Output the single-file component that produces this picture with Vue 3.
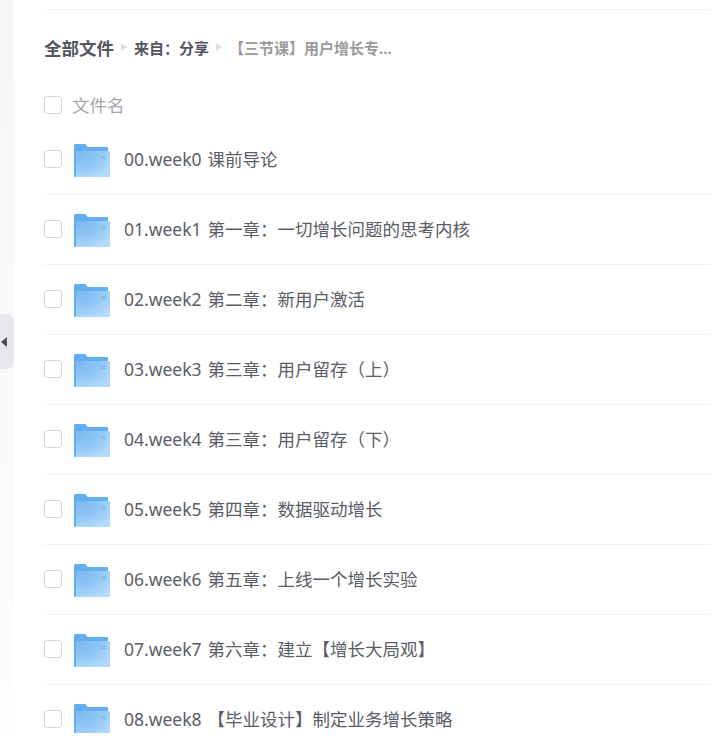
<script setup>
const files = [
  '00.week0 课前导论',
  '01.week1 第一章：一切增长问题的思考内核',
  '02.week2 第二章：新用户激活',
  '03.week3 第三章：用户留存（上）',
  '04.week4 第三章：用户留存（下）',
  '05.week5 第四章：数据驱动增长',
  '06.week6 第五章：上线一个增长实验',
  '07.week7 第六章：建立【增长大局观】',
  '08.week8 【毕业设计】制定业务增长策略'
];
</script>

<template>
  <div class="page">
    <aside class="side">
      <div class="handle"><span class="arrow"></span></div>
    </aside>
    <main class="content">
      <div class="crumbs">
        <span class="crumb-root">全部文件</span>
        <span class="sep"></span>
        <span class="crumb-mid">来自：分享</span>
        <span class="sep"></span>
        <span class="crumb-last">【三节课】用户增长专...</span>
      </div>
      <div class="head">
        <span class="check"></span>
        <span class="head-name">文件名</span>
      </div>
      <div v-for="name in files" :key="name" class="row">
        <span class="check"></span>
        <svg class="folder" width="36" height="33" viewBox="0 0 36 33">
          <defs>
            <radialGradient id="front" cx="0.15" cy="0.05" r="1.05">
              <stop offset="0" stop-color="#7cb9f0" />
              <stop offset="0.5" stop-color="#8fc5f5" />
              <stop offset="1" stop-color="#b2d9fc" />
            </radialGradient>
          </defs>
          <path d="M0 1.5Q0 0 1.5 0H11.5L13.5 3H33Q34 3 34 4V8H2V33H1.5Q0 33 0 31.5Z" fill="#62aeef" />
          <path d="M2 7H35Q36 7 36 8V32Q36 33 35 33H2Z" fill="url(#front)" />
          <path d="M27 12.5H32M27 14.5H32" stroke="#74b3ec" stroke-width="1" fill="none" />
        </svg>
        <span class="name">{{ name }}</span>
      </div>
    </main>
  </div>
</template>

<style scoped>
.page {
  display: flex;
  height: 733px;
  overflow: hidden;
  background: #fff;
  font-family: "Noto Sans", "Noto Sans CJK SC", sans-serif;
}

.side {
  flex: none;
  width: 14px;
  height: 100%;
  padding-top: 314px;
  box-sizing: border-box;
  background: linear-gradient(#f6f7f9, #f8f9fb 50%, #fdfdfe);
}

.handle {
  display: flex;
  align-items: center;
  width: 14px;
  height: 55px;
  padding-left: 1px;
  box-sizing: border-box;
  background: #e6e8ee;
  border-radius: 0 8px 8px 0;
}

.arrow {
  width: 0;
  height: 0;
  border-top: 5px solid transparent;
  border-bottom: 5px solid transparent;
  border-right: 6px solid #4a4d55;
}

.content {
  flex: 1;
  min-width: 0;
  margin-left: 30px;
  padding-top: 9px;
}

.crumbs {
  display: flex;
  align-items: center;
  height: 77px;
  padding-bottom: 2px;
  box-sizing: border-box;
  border-top: 1px solid #f2f3f5;
  white-space: nowrap;
}

.crumb-root {
  font-size: 17.5px;
  font-weight: 700;
  color: #53565e;
}

.crumb-mid {
  font-size: 15px;
  font-weight: 700;
  color: #53565e;
}

.crumb-last {
  font-size: 15px;
  font-weight: 700;
  color: #9b9b9b;
}

.sep {
  width: 0;
  height: 0;
  margin: 0 7px;
  border-top: 4px solid transparent;
  border-bottom: 4px solid transparent;
  border-left: 6px solid #dcdde0;
}

.head {
  display: flex;
  align-items: center;
  height: 39px;
  padding-bottom: 1px;
  box-sizing: border-box;
}

.head-name {
  margin-left: 10px;
  margin-bottom: 2px;
  font-size: 17.5px;
  color: #a5a7ab;
}

.check {
  flex: none;
  width: 18px;
  height: 18px;
  box-sizing: border-box;
  border: 1px solid #d5d7db;
  border-radius: 3px;
  background: #fff;
}

.row {
  display: flex;
  align-items: center;
  height: 70px;
  box-sizing: border-box;
  border-bottom: 1px solid #f3f4f6;
}

.row .check {
  margin-bottom: 2px;
}

.folder {
  flex: none;
  margin-left: 12px;
  margin-top: 2px;
}

.name {
  margin-left: 14px;
  margin-bottom: 3px;
  font-size: 17.5px;
  word-spacing: 1.5px;
  color: #5a5d66;
  white-space: nowrap;
}
</style>

<style>
html, body {
  margin: 0;
  background: #fff;
}
</style>
